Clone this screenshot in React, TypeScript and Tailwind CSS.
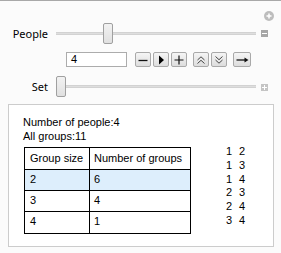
import React from "react";

const Btn = ({ children, w = 16 }: { children: React.ReactNode; w?: number }) => (
  <div
    className={`flex items-center justify-center h-[15px] border border-[#a9a9a9] rounded-[2px] bg-gradient-to-b from-[#f5f5f5] to-[#dddddd] ${w === 18 ? "w-[18px]" : "w-[16px]"}`}
  >
    {children}
  </div>
);

const Slider = ({ pos }: { pos: number }) => (
  <div className="relative w-[200px] h-[21px] flex items-center">
    <div className="w-full h-[3px] bg-[#dedede] border-y border-[#d2d2d2]" />
    <div
      className="absolute top-0 w-[10px] h-[21px] rounded-[2px] border border-[#a0a0a0] bg-gradient-to-b from-[#f2f2f2] to-[#e0e0e0]"
      style={{ left: pos }}
    />
  </div>
);

export default function App() {
  const pairs = [
    ["1", "2"],
    ["1", "3"],
    ["1", "4"],
    ["2", "3"],
    ["2", "4"],
    ["3", "4"],
  ];
  const rows = [
    ["2", "6", true],
    ["3", "4", false],
    ["4", "1", false],
  ] as const;
  return (
    <div className="w-[281px] h-[253px] bg-[#fbfbfb] border-t border-[#a8a8a8] overflow-hidden">
      {/* plus circle */}
      <div className="flex justify-end pr-[7px] mt-[10px] h-[10px]">
        <div className="w-[10px] h-[10px] rounded-full bg-[#bdbdbd] flex items-center justify-center">
          <svg width="6" height="6" viewBox="0 0 6 6">
            <path d="M3 0.5V5.5M0.5 3H5.5" stroke="#fff" strokeWidth="1.5" />
          </svg>
        </div>
      </div>
      {/* People row */}
      <div className="flex items-center mt-[2px] h-[21px]" style={{ fontFamily: '"Noto Sans", sans-serif' }}>
        <div className="w-[48px] text-right text-[11px] text-black leading-none">People</div>
        <div className="ml-[8px]">
          <Slider pos={47} />
        </div>
        <div className="ml-[5px] w-[7px] h-[7px] bg-[#a6a6a6] flex items-center justify-center">
          <div className="w-[5px] h-[1px] bg-white" />
        </div>
      </div>
      {/* control row */}
      <div className="flex items-center mt-[8px] h-[15px]" style={{ fontFamily: '"Liberation Sans", Arial, sans-serif' }}>
        <div className="ml-[66px] w-[61px] h-[15px] border border-[#acacac] bg-white text-[11px] leading-[13px] pl-[4px] text-black">
          4
        </div>
        <div className="ml-[8px] flex gap-[2px]">
          <Btn>
            <svg width="10" height="10" viewBox="0 0 10 10">
              <path d="M0.5 5.5H9.5" stroke="#111" strokeWidth="1.3" />
            </svg>
          </Btn>
          <Btn>
            <svg width="10" height="10" viewBox="0 0 10 10">
              <path d="M3 0.5L8 5L3 9.5Z" fill="#000" />
            </svg>
          </Btn>
          <Btn>
            <svg width="10" height="10" viewBox="0 0 10 10">
              <path d="M5 0.5V9.5M0.5 5H9.5" stroke="#111" strokeWidth="1.2" />
            </svg>
          </Btn>
        </div>
        <div className="ml-[6px] flex gap-[2px]">
          <Btn>
            <svg width="10" height="10" viewBox="0 0 10 10">
              <path d="M1.5 5L5 1.8L8.5 5M1.5 8.5L5 5.3L8.5 8.5" stroke="#333" strokeWidth="0.9" fill="none" />
            </svg>
          </Btn>
          <Btn>
            <svg width="10" height="10" viewBox="0 0 10 10">
              <path d="M1.5 1.5L5 4.7L8.5 1.5M1.5 5L5 8.2L8.5 5" stroke="#333" strokeWidth="0.9" fill="none" />
            </svg>
          </Btn>
        </div>
        <div className="ml-[6px]">
          <Btn w={18}>
            <svg width="13" height="10" viewBox="0 0 13 10">
              <path d="M0.5 5H10" stroke="#111" strokeWidth="1.3" />
              <path d="M8.5 2.5L12.5 5L8.5 7.5Z" fill="#111" />
            </svg>
          </Btn>
        </div>
      </div>
      {/* Set row */}
      <div className="flex items-center mt-[9px] h-[21px]" style={{ fontFamily: '"Noto Sans", sans-serif' }}>
        <div className="w-[48px] text-right text-[11px] text-black leading-none">Set</div>
        <div className="ml-[8px]">
          <Slider pos={0} />
        </div>
        <div className="ml-[5px] mt-[2px] w-[7px] h-[7px] bg-[#c4c4c4] flex items-center justify-center">
          <svg width="5" height="5" viewBox="0 0 5 5">
            <path d="M2.5 0V5M0 2.5H5" stroke="#fff" strokeWidth="1" />
          </svg>
        </div>
      </div>
      {/* output panel */}
      <div
        className="mt-[7px] ml-[8px] w-[266px] h-[143px] border border-[#cccccc] bg-white pl-[14px] pt-[10px] text-[11px] text-black"
        style={{ fontFamily: '"Liberation Sans", Arial, sans-serif' }}
      >
        <div className="leading-[14px]">Number of people:4</div>
        <div className="leading-[14px]">All groups:11</div>
        <div className="flex items-start mt-[2px]">
          <div className="ml-[1px] mt-[2px] w-[167px] border border-black">
            <div className="flex h-[22px] border-b border-black">
              <div className="w-[65px] border-r border-black pl-[5px] flex items-center">Group size</div>
              <div className="flex-1 pl-[4px] flex items-center">Number of groups</div>
            </div>
            {rows.map(([a, b, hl], i) => (
              <div
                key={a}
                className={`flex h-[21px] ${i < rows.length - 1 ? "border-b border-black" : "h-[20px]"} ${hl ? "bg-[#ddeefc]" : ""}`}
              >
                <div className="w-[65px] border-r border-black pl-[5px] flex items-center pb-[2px]">{a}</div>
                <div className="flex-1 pl-[4px] flex items-center pb-[2px]">{b}</div>
              </div>
            ))}
          </div>
          <div className="ml-[35px] grid grid-cols-[6px_6px] gap-x-[7px] leading-[13.8px]">
            {pairs.map(([a, b], i) => (
              <React.Fragment key={i}>
                <div>{a}</div>
                <div>{b}</div>
              </React.Fragment>
            ))}
          </div>
        </div>
      </div>
    </div>
  );
}
